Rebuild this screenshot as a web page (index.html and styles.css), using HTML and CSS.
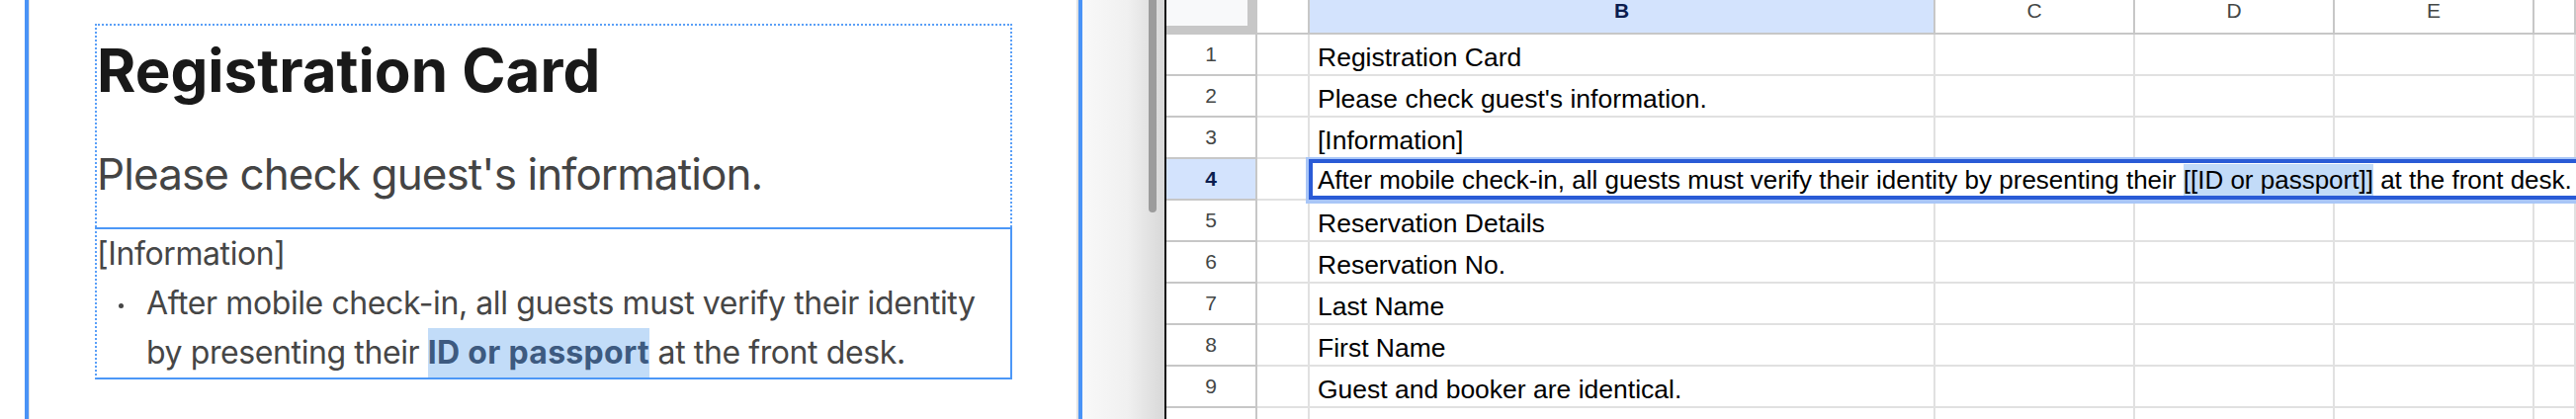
FILE: index.html
```html
<!DOCTYPE html>
<html lang="en">
<head>
<meta charset="utf-8">
<title>Registration Card</title>
<link rel="stylesheet" href="styles.css">
</head>
<body>
<div class="page">
  <section class="doc">
    <div class="block block-head">
      <h1 class="title">Registration Card</h1>
      <p class="subtitle">Please check guest's information.</p>
    </div>
    <div class="block block-info">
      <p class="info-title">[Information]</p>
      <ul class="info-list">
        <li><span class="dot"></span><span class="li-text">After mobile check-in, all guests must verify their identity by presenting their <b class="hl">ID or passport</b> at the front desk.</span></li>
      </ul>
    </div>
  </section>
  <div class="shade"><div class="thumb"></div></div>
  <div class="divider"></div>
  <section class="sheet">
    <div class="row head">
      <div class="cell corner"></div>
      <div class="cell ch"></div>
      <div class="cell ch ch-sel">B</div>
      <div class="cell ch">C</div>
      <div class="cell ch">D</div>
      <div class="cell ch">E</div>
      <div class="cell ch"></div>
    </div>
    <div class="row">
      <div class="cell rh">1</div><div class="cell"></div>
      <div class="cell txt">Registration Card</div>
      <div class="cell"></div><div class="cell"></div><div class="cell"></div><div class="cell"></div>
    </div>
    <div class="row">
      <div class="cell rh">2</div><div class="cell"></div>
      <div class="cell txt">Please check guest's information.</div>
      <div class="cell"></div><div class="cell"></div><div class="cell"></div><div class="cell"></div>
    </div>
    <div class="row">
      <div class="cell rh">3</div><div class="cell"></div>
      <div class="cell txt">[Information]</div>
      <div class="cell"></div><div class="cell"></div><div class="cell"></div><div class="cell"></div>
    </div>
    <div class="row">
      <div class="cell rh rh-sel">4</div><div class="cell"></div>
      <div class="cell span-rest">
        <div class="editor">After mobile check-in, all guests must verify their identity by presenting their <span class="sel">[[ID or passport]]</span> at the front desk.</div>
      </div>
    </div>
    <div class="row">
      <div class="cell rh">5</div><div class="cell"></div>
      <div class="cell txt">Reservation Details</div>
      <div class="cell"></div><div class="cell"></div><div class="cell"></div><div class="cell"></div>
    </div>
    <div class="row">
      <div class="cell rh">6</div><div class="cell"></div>
      <div class="cell txt">Reservation No.</div>
      <div class="cell"></div><div class="cell"></div><div class="cell"></div><div class="cell"></div>
    </div>
    <div class="row">
      <div class="cell rh">7</div><div class="cell"></div>
      <div class="cell txt">Last Name</div>
      <div class="cell"></div><div class="cell"></div><div class="cell"></div><div class="cell"></div>
    </div>
    <div class="row">
      <div class="cell rh">8</div><div class="cell"></div>
      <div class="cell txt">First Name</div>
      <div class="cell"></div><div class="cell"></div><div class="cell"></div><div class="cell"></div>
    </div>
    <div class="row">
      <div class="cell rh">9</div><div class="cell"></div>
      <div class="cell txt">Guest and booker are identical.</div>
      <div class="cell"></div><div class="cell"></div><div class="cell"></div><div class="cell"></div>
    </div>
    <div class="row">
      <div class="cell rh"></div><div class="cell"></div>
      <div class="cell"></div>
      <div class="cell"></div><div class="cell"></div><div class="cell"></div><div class="cell"></div>
    </div>
  </section>
</div>
</body>
</html>
```
FILE: styles.css
```css
html, body {
  margin: 0;
  padding: 0;
  background: #ffffff;
}
body {
  width: 2606px;
  height: 424px;
  overflow: hidden;
}
.page {
  display: flex;
  height: 424px;
  padding-left: 25px;
  box-sizing: border-box;
  overflow: hidden;
}

/* ---------- document panel ---------- */
.doc {
  flex: none;
  width: 1070px;
  box-sizing: border-box;
  border-left: 4px solid #4a93f6;
  border-right: 4px solid #4a93f6;
  box-shadow: inset 1px 0 0 #e2e2e2, inset -2px 0 0 #e2e2e2;
  padding: 24px 67px 0;
  font-family: "Inter", "Noto Sans", sans-serif;
  color: #464646;
}
.block {
  box-sizing: border-box;
  width: 928px;
}
.block-head {
  border: 2px dotted #5a9ff7;
  border-bottom: none;
  padding: 9px 0 26px;
}
.title {
  margin: 0;
  font-size: 60px;
  line-height: 72px;
  font-weight: 700;
  color: #191919;
  letter-spacing: 0;
}
.subtitle {
  margin: 41px 0 0;
  font-size: 44px;
  line-height: 56px;
  font-weight: 400;
  color: #444444;
  letter-spacing: -0.9px;
}
.block-info {
  border-top: 2px solid #4c97f7;
  border-right: 2px solid #4c97f7;
  border-bottom: 2px solid #4c97f7;
  border-left: 2px dotted #5a9ff7;
  font-size: 32px;
  line-height: 50px;
  letter-spacing: -0.4px;
}
.info-title {
  margin: 0;
}
.info-list {
  list-style: none;
  margin: 0;
  padding: 0;
}
.info-list li {
  display: flex;
}
.dot {
  flex: none;
  width: 5px;
  height: 5px;
  border-radius: 50%;
  background: #464646;
  margin: 25px 23px 0 22px;
}
.li-text {
  flex: 1;
}
.hl {
  display: inline-block;
  font-weight: 700;
  color: #3d5a80;
  background: #c2dcf8;
  letter-spacing: 0.3px;
}

/* ---------- shading + scrollbar ---------- */
.shade {
  flex: none;
  width: 83px;
  box-sizing: border-box;
  padding-right: 8px;
  display: flex;
  justify-content: flex-end;
  background: linear-gradient(90deg, #f9f9f9 0%, #f0f0f0 55%, #d8d8d8 100%);
}
.thumb {
  width: 8px;
  height: 215px;
  background: #9c9c9c;
  border-radius: 0 0 4px 4px;
}
.divider {
  flex: none;
  width: 2px;
  background: #111111;
}

/* ---------- spreadsheet ---------- */
.sheet {
  flex: 1;
  min-width: 0;
  height: 424px;
  overflow: hidden;
  font-family: "Liberation Sans", Arial, sans-serif;
  color: #000000;
}
.row {
  display: grid;
  grid-template-columns: 92px 53px 633px 202px 202px 202px 1fr;
  height: 42px;
}
.row.head {
  height: 35px;
}
.cell {
  box-sizing: border-box;
  border-right: 2px solid #e1e1e1;
  border-bottom: 2px solid #e1e1e1;
  min-width: 0;
}
.corner {
  background: #f8f9fa;
  border-right: 10px solid #c7c7c7;
  border-bottom: 9px solid #c7c7c7;
}
.ch {
  border-right-color: #c7c7c7;
  border-bottom-color: #c7c7c7;
  text-align: center;
  font-size: 21px;
  line-height: 22px;
  color: #444746;
}
.ch-sel {
  background: #d3e3fd;
  font-weight: 700;
  color: #0b1d4f;
}
.rh {
  border-right-color: #c7c7c7;
  border-bottom-color: #c7c7c7;
  display: flex;
  align-items: center;
  justify-content: center;
  font-size: 21px;
  color: #444746;
}
.rh-sel {
  background: #d3e3fd;
  font-weight: 700;
  color: #0b1d4f;
}
.txt {
  display: flex;
  align-items: flex-end;
  padding: 0 0 2px 8px;
  font-size: 26.5px;
  line-height: 30px;
  white-space: nowrap;
}
.span-rest {
  grid-column: 3 / -1;
  position: relative;
  border-right: none;
}
.editor {
  position: absolute;
  top: 0;
  left: -1px;
  right: -20px;
  bottom: -1px;
  border: 4px solid #2a5bd6;
  box-shadow: 0 1px 0 3px #a9c6f7;
  padding: 0 0 0 5px;
  font-size: 26px;
  line-height: 35px;
  white-space: nowrap;
  background: #ffffff;
}
.sel {
  background: #c2dbf8;
  padding: 1px 0;
}
```
